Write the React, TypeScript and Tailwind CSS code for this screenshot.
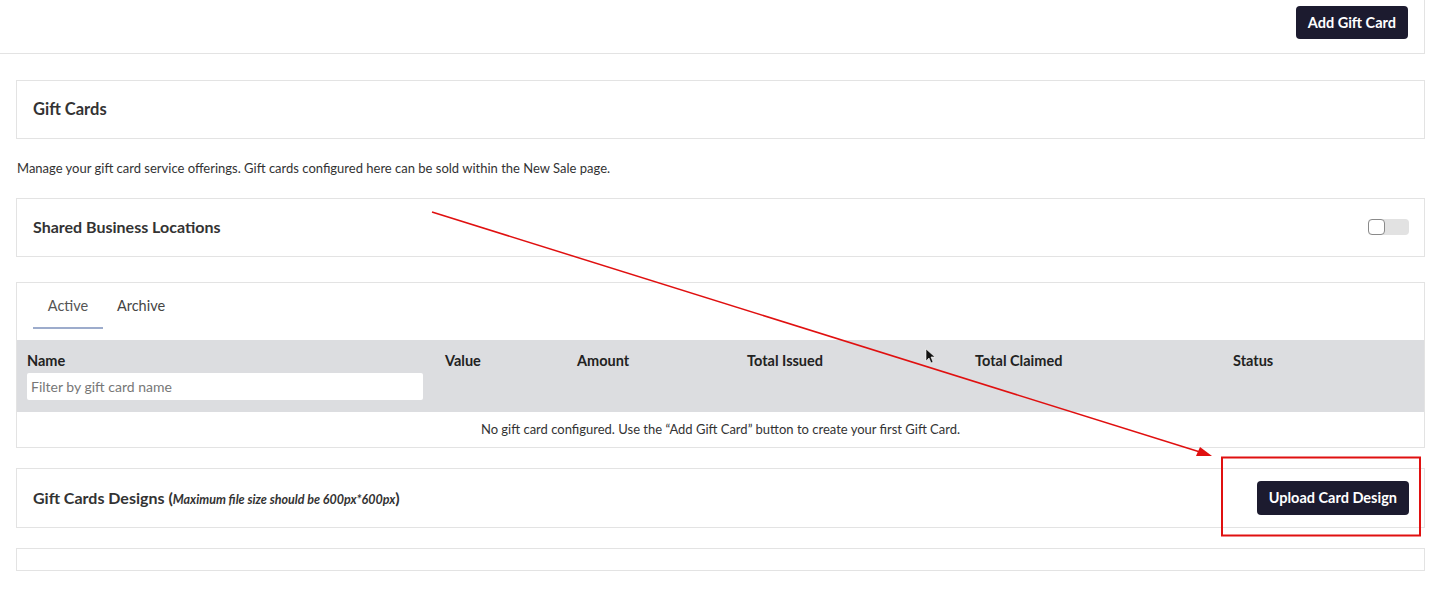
import React from "react";

function Card({ className = "", children }: { className?: string; children?: React.ReactNode }) {
  return <div className={"border border-[#e3e3e3] bg-white " + className}>{children}</div>;
}

export default function App() {
  return (
    <div className="relative w-[1429px] h-[592px] bg-white overflow-hidden text-[#333]" style={{ fontFamily: "Lato, 'Noto Sans', sans-serif" }}>
      {/* top bar */}
      <div className="h-[54px] mr-[4px] border-b border-r border-[#e3e3e3] flex items-start justify-end pt-[6px] pr-[16px]">
        <button className="h-[33px] px-[12px] rounded-[4px] bg-[#1c1b2f] text-white text-[14.5px] font-bold">Add Gift Card</button>
      </div>

      <div className="pl-[16px] pr-[4px] pt-[26px] flex flex-col">
        <Card className="h-[59px] flex items-center px-[16px]">
          <div className="text-[16.5px] font-bold text-[#333]">Gift Cards</div>
        </Card>

        <div className="h-[59px] flex items-center text-[13px] text-[#333] pl-[1px]">
          Manage your gift card service offerings. Gift cards configured here can be sold within the New Sale page.
        </div>

        <Card className="h-[59px] flex items-center justify-between pl-[16px] pr-[15px] pb-[2px]">
          <div className="text-[16px] font-bold text-[#333]">Shared Business Locations</div>
          <div className="relative w-[41px] h-[16px] rounded-[4px] bg-[#e2e2e2]">
            <div className="absolute left-0 top-0 w-[17px] h-[16px] rounded-[4px] bg-white border border-[#8a8a8a]" />
          </div>
        </Card>

        <Card className="mt-[25px] flex flex-col">
          <div className="h-[57px] flex items-start pl-[16px] pt-[13px]">
            <div className="w-[70px] h-[33px] flex items-start justify-center border-b-[2px] border-[#9daccc] text-[14.5px] leading-[20px] text-[#555]">Active</div>
            <div className="w-[76px] h-[33px] flex items-start justify-center text-[14.5px] leading-[20px] text-[#444]">Archive</div>
          </div>
          <div className="h-[72px] bg-[#dcdde0] grid grid-cols-[418px_132px_170px_228px_258px_1fr] pl-[10px] pt-[11px] text-[14.5px] font-bold text-[#222]">
            <div className="flex flex-col gap-[2px]">
              <div className="leading-[20px]">Name</div>
              <div className="w-[396px] h-[27px] bg-white rounded-[2px] flex items-center px-[4px] text-[14px] font-normal text-[#777]">Filter by gift card name</div>
            </div>
            <div className="leading-[20px]">Value</div>
            <div className="leading-[20px]">Amount</div>
            <div className="leading-[20px]">Total Issued</div>
            <div className="leading-[20px]">Total Claimed</div>
            <div className="leading-[20px]">Status</div>
          </div>
          <div className="h-[35px] flex items-center justify-center text-[13px] text-[#333]">
            No gift card configured. Use the “Add Gift Card” button to create your first Gift Card.
          </div>
        </Card>

        <Card className="mt-[20px] h-[60px] flex items-center justify-between pl-[16px] pr-[15px]">
          <div className="text-[16px] font-bold text-[#333]">
            Gift Cards Designs (<span className="italic text-[12.5px]">Maximum file size should be 600px*600px</span>)
          </div>
          <button className="h-[34px] px-[12px] rounded-[4px] bg-[#1c1b2f] text-white text-[14.5px] font-bold">Upload Card Design</button>
        </Card>

        <Card className="mt-[20px] h-[23px]" />
      </div>

      {/* annotation overlay */}
      <svg className="absolute left-0 top-0 pointer-events-none" width="1429" height="592">
        <line x1="432" y1="212" x2="1200" y2="452" stroke="#e01010" strokeWidth="1.5" />
        <polygon points="1212,456 1196,456 1200,447" fill="#e01010" />
        <rect x="1222" y="457.5" width="198" height="78" fill="none" stroke="#e01010" strokeWidth="2" />
        <path d="M926 349 L926 361 L929 358 L931 363 L933 362 L931 357 L935 357 Z" fill="#111" stroke="#fff" strokeWidth="0.6" />
      </svg>
    </div>
  );
}
